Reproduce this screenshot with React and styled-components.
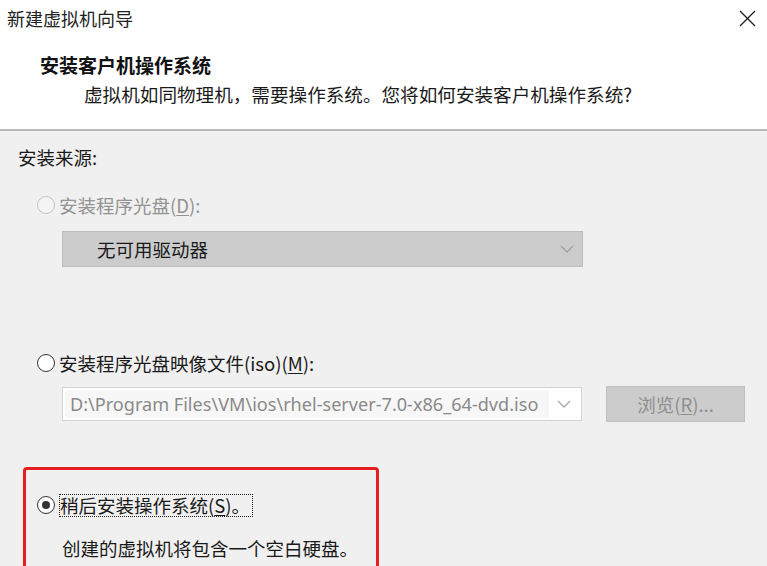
import React from "react";
import styled, { createGlobalStyle } from "styled-components";

const GlobalStyle = createGlobalStyle`
  html, body {
    margin: 0;
    padding: 0;
    background: #f0f0f0;
  }
  body {
    width: 767px;
    height: 566px;
    overflow: hidden;
    font-family: "Noto Sans CJK SC", "Noto Sans", sans-serif;
    color: #1a1a1a;
  }
`;

const Window = styled.div`
  width: 767px;
  height: 566px;
  display: flex;
  flex-direction: column;
  background: #f0f0f0;
  overflow: hidden;
`;

const Header = styled.div`
  flex-shrink: 0;
  height: 129px;
  background: #ffffff;
  border-bottom: 2px solid #b9b9b9;
  display: flex;
  flex-direction: column;
`;

const TitleBar = styled.div`
  height: 36px;
  display: flex;
  align-items: center;
  justify-content: space-between;
  padding: 0 10px 0 7px;
  font-size: 18px;
  color: #222;
`;

const CloseButton = styled.div`
  width: 20px;
  height: 20px;
  display: flex;
  align-items: center;
  justify-content: center;
`;

const Heading = styled.div`
  margin: 15px 0 0 40px;
  font-size: 19px;
  line-height: 28px;
  font-weight: 700;
  color: #111;
`;

const Subtitle = styled.div`
  margin: 1px 0 0 84px;
  font-size: 18.6px;
  line-height: 28px;
  color: #1a1a1a;
`;

const Body = styled.div`
  flex: 1;
  min-height: 0;
  padding: 12px 0 0 18px;
  display: flex;
  flex-direction: column;
`;

const Label = styled.div`
  font-size: 18.5px;
  line-height: 28px;
  color: ${(p) => (p.$disabled ? "#939393" : "#1a1a1a")};
`;

const RadioRow = styled.div`
  flex-shrink: 0;
  display: flex;
  align-items: center;
  height: 28px;
  margin-top: ${(p) => p.$top || 0}px;
  padding-left: ${(p) => p.$indent || 0}px;
  gap: 4px;
`;

const RadioCircle = styled.span`
  box-sizing: border-box;
  width: 18px;
  height: 18px;
  border-radius: 50%;
  border: 1.5px solid ${(p) => (p.$disabled ? "#c4c4c4" : "#333")};
  background: ${(p) => (p.$disabled ? "#f4f4f4" : "#ffffff")};
  display: flex;
  align-items: center;
  justify-content: center;
  flex-shrink: 0;

  &::after {
    content: "";
    display: ${(p) => (p.$checked ? "block" : "none")};
    width: 8px;
    height: 8px;
    border-radius: 50%;
    background: #333;
  }
`;

const FocusLabel = styled.span`
  display: inline-block;
  border: 1px dotted #222;
  padding: 0 2px 0 0;
  line-height: 21px;
`;

const U = styled.span`
  text-decoration: underline;
  text-underline-offset: 2px;
`;

const Select = styled.div`
  flex-shrink: 0;
  box-sizing: border-box;
  width: 521px;
  height: 36px;
  margin: 12px 0 0 44px;
  background: #cccccc;
  border: 1px solid #bdbdbd;
  display: flex;
  align-items: center;
  justify-content: space-between;
  padding: 0 8px 0 34px;
  font-size: 18.5px;
  color: #1a1a1a;
`;

const FileRow = styled.div`
  flex-shrink: 0;
  display: flex;
  align-items: center;
  height: 36px;
  margin: 9px 0 0 44px;
  gap: 24px;
`;

const Combo = styled.div`
  box-sizing: border-box;
  width: 520px;
  height: 34px;
  background: #ffffff;
  border: 1px solid #d4d4d4;
  display: flex;
  align-items: center;
  padding: 2px;
`;

const ComboText = styled.div`
  flex: 1;
  height: 100%;
  background: #f7f7f7;
  display: flex;
  align-items: center;
  padding-left: 5px;
  font-family: "Noto Sans", "Open Sans", sans-serif;
  font-size: 18.1px;
  color: #8a8a8a;
  white-space: nowrap;
  overflow: hidden;
`;

const Arrow = styled.div`
  width: 30px;
  display: flex;
  align-items: center;
  justify-content: center;
`;

const BrowseButton = styled.div`
  box-sizing: border-box;
  width: 139px;
  height: 36px;
  background: #cccccc;
  border: 1px solid #bfbfbf;
  display: flex;
  align-items: center;
  justify-content: center;
  font-size: 18.5px;
  color: #8f8f8f;
`;

const Highlight = styled.div`
  flex-shrink: 0;
  box-sizing: border-box;
  width: 356px;
  height: 140px;
  margin: 45px 0 0 5px;
  border: 3px solid #e51f1f;
  border-radius: 4px;
  padding: 21px 0 0 11px;
  display: flex;
  flex-direction: column;
`;

const Description = styled.div`
  margin: 15px 0 0 25px;
  font-size: 18.5px;
  line-height: 28px;
  color: #1a1a1a;
`;

const Chevron = ({ color = "#a8a8a8" }) => (
  <svg width="14" height="8" viewBox="0 0 14 8">
    <polyline points="1,1 7,7 13,1" fill="none" stroke={color} strokeWidth="1.3" />
  </svg>
);

export default function App() {
  return (
    <Window>
      <GlobalStyle />
      <Header>
        <TitleBar>
          <span>新建虚拟机向导</span>
          <CloseButton>
            <svg width="17" height="17" viewBox="0 0 17 17">
              <path d="M1 1 L16 16 M16 1 L1 16" stroke="#222" strokeWidth="1.4" />
            </svg>
          </CloseButton>
        </TitleBar>
        <Heading>安装客户机操作系统</Heading>
        <Subtitle>虚拟机如同物理机，需要操作系统。您将如何安装客户机操作系统?</Subtitle>
      </Header>
      <Body>
        <Label>安装来源:</Label>

        <RadioRow $top={20} $indent={19}>
          <RadioCircle $disabled />
          <Label $disabled>
            安装程序光盘(<U>D</U>):
          </Label>
        </RadioRow>
        <Select>
          <span>无可用驱动器</span>
          <Chevron color="#a0a0a0" />
        </Select>

        <RadioRow $top={82} $indent={19}>
          <RadioCircle />
          <Label>
            安装程序光盘映像文件(iso)(<U>M</U>):
          </Label>
        </RadioRow>
        <FileRow>
          <Combo>
            <ComboText>D:\Program Files\VM\ios\rhel-server-7.0-x86_64-dvd.iso</ComboText>
            <Arrow>
              <Chevron />
            </Arrow>
          </Combo>
          <BrowseButton>
            浏览(<U>R</U>)...
          </BrowseButton>
        </FileRow>

        <Highlight>
          <RadioRow>
            <RadioCircle $checked />
            <Label>
              <FocusLabel>
                稍后安装操作系统(<U>S</U>)。
              </FocusLabel>
            </Label>
          </RadioRow>
          <Description>创建的虚拟机将包含一个空白硬盘。</Description>
        </Highlight>
      </Body>
    </Window>
  );
}
